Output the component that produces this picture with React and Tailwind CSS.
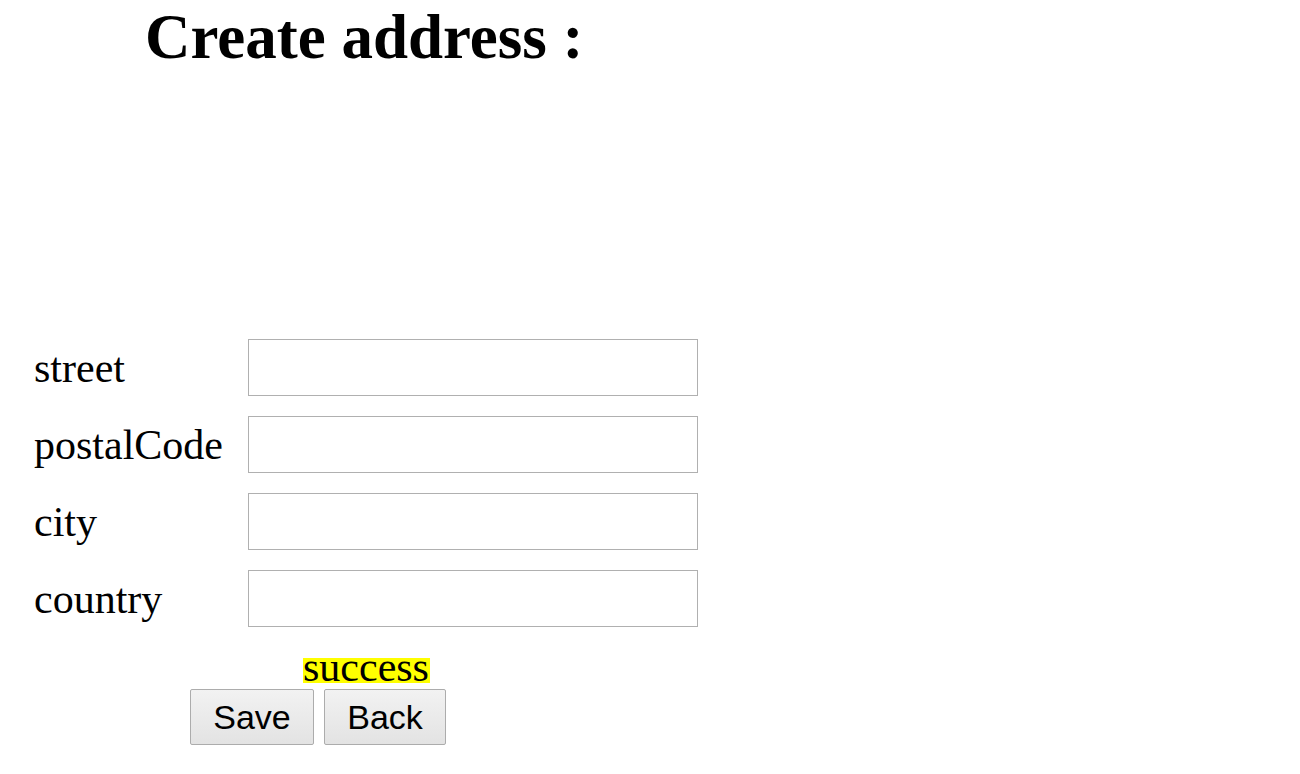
import React from "react";

const FIELDS = ["street", "postalCode", "city", "country"];

export default function App() {
  return (
    <main className="min-h-screen bg-white text-black" style={{ fontFamily: '"Liberation Serif", "Times New Roman", serif' }}>
      <h2 className="ml-[145px] pt-[2px] text-[63px] font-bold leading-[70px]">Create address :</h2>

      <form className="mt-[267px] flex flex-col gap-[20px] pl-[34px]">
        {FIELDS.map((f) => (
          <div key={f} className="flex items-center">
            <label className="w-[214px] text-[42px] leading-[56px]">{f}</label>
            <input type="text" className="h-[57px] w-[450px] border border-[#b0b0b0] bg-white outline-none" />
          </div>
        ))}
      </form>

      <div className="mt-[31px] ml-[303px] flex">
        <span className="h-[25px] bg-[#ffff00] pr-[1px] text-[42px] leading-[18px]">success</span>
      </div>

      <div className="mt-[6px] ml-[190px] flex gap-[10px]" style={{ fontFamily: '"Liberation Sans", Arial, sans-serif' }}>
        <button className="h-[56px] w-[124px] rounded-[2px] border border-[#acacac] bg-gradient-to-b from-[#f2f2f2] to-[#e3e3e3] text-[34px] leading-none">Save</button>
        <button className="h-[56px] w-[122px] rounded-[2px] border border-[#acacac] bg-gradient-to-b from-[#f2f2f2] to-[#e3e3e3] text-[34px] leading-none">Back</button>
      </div>
    </main>
  );
}
